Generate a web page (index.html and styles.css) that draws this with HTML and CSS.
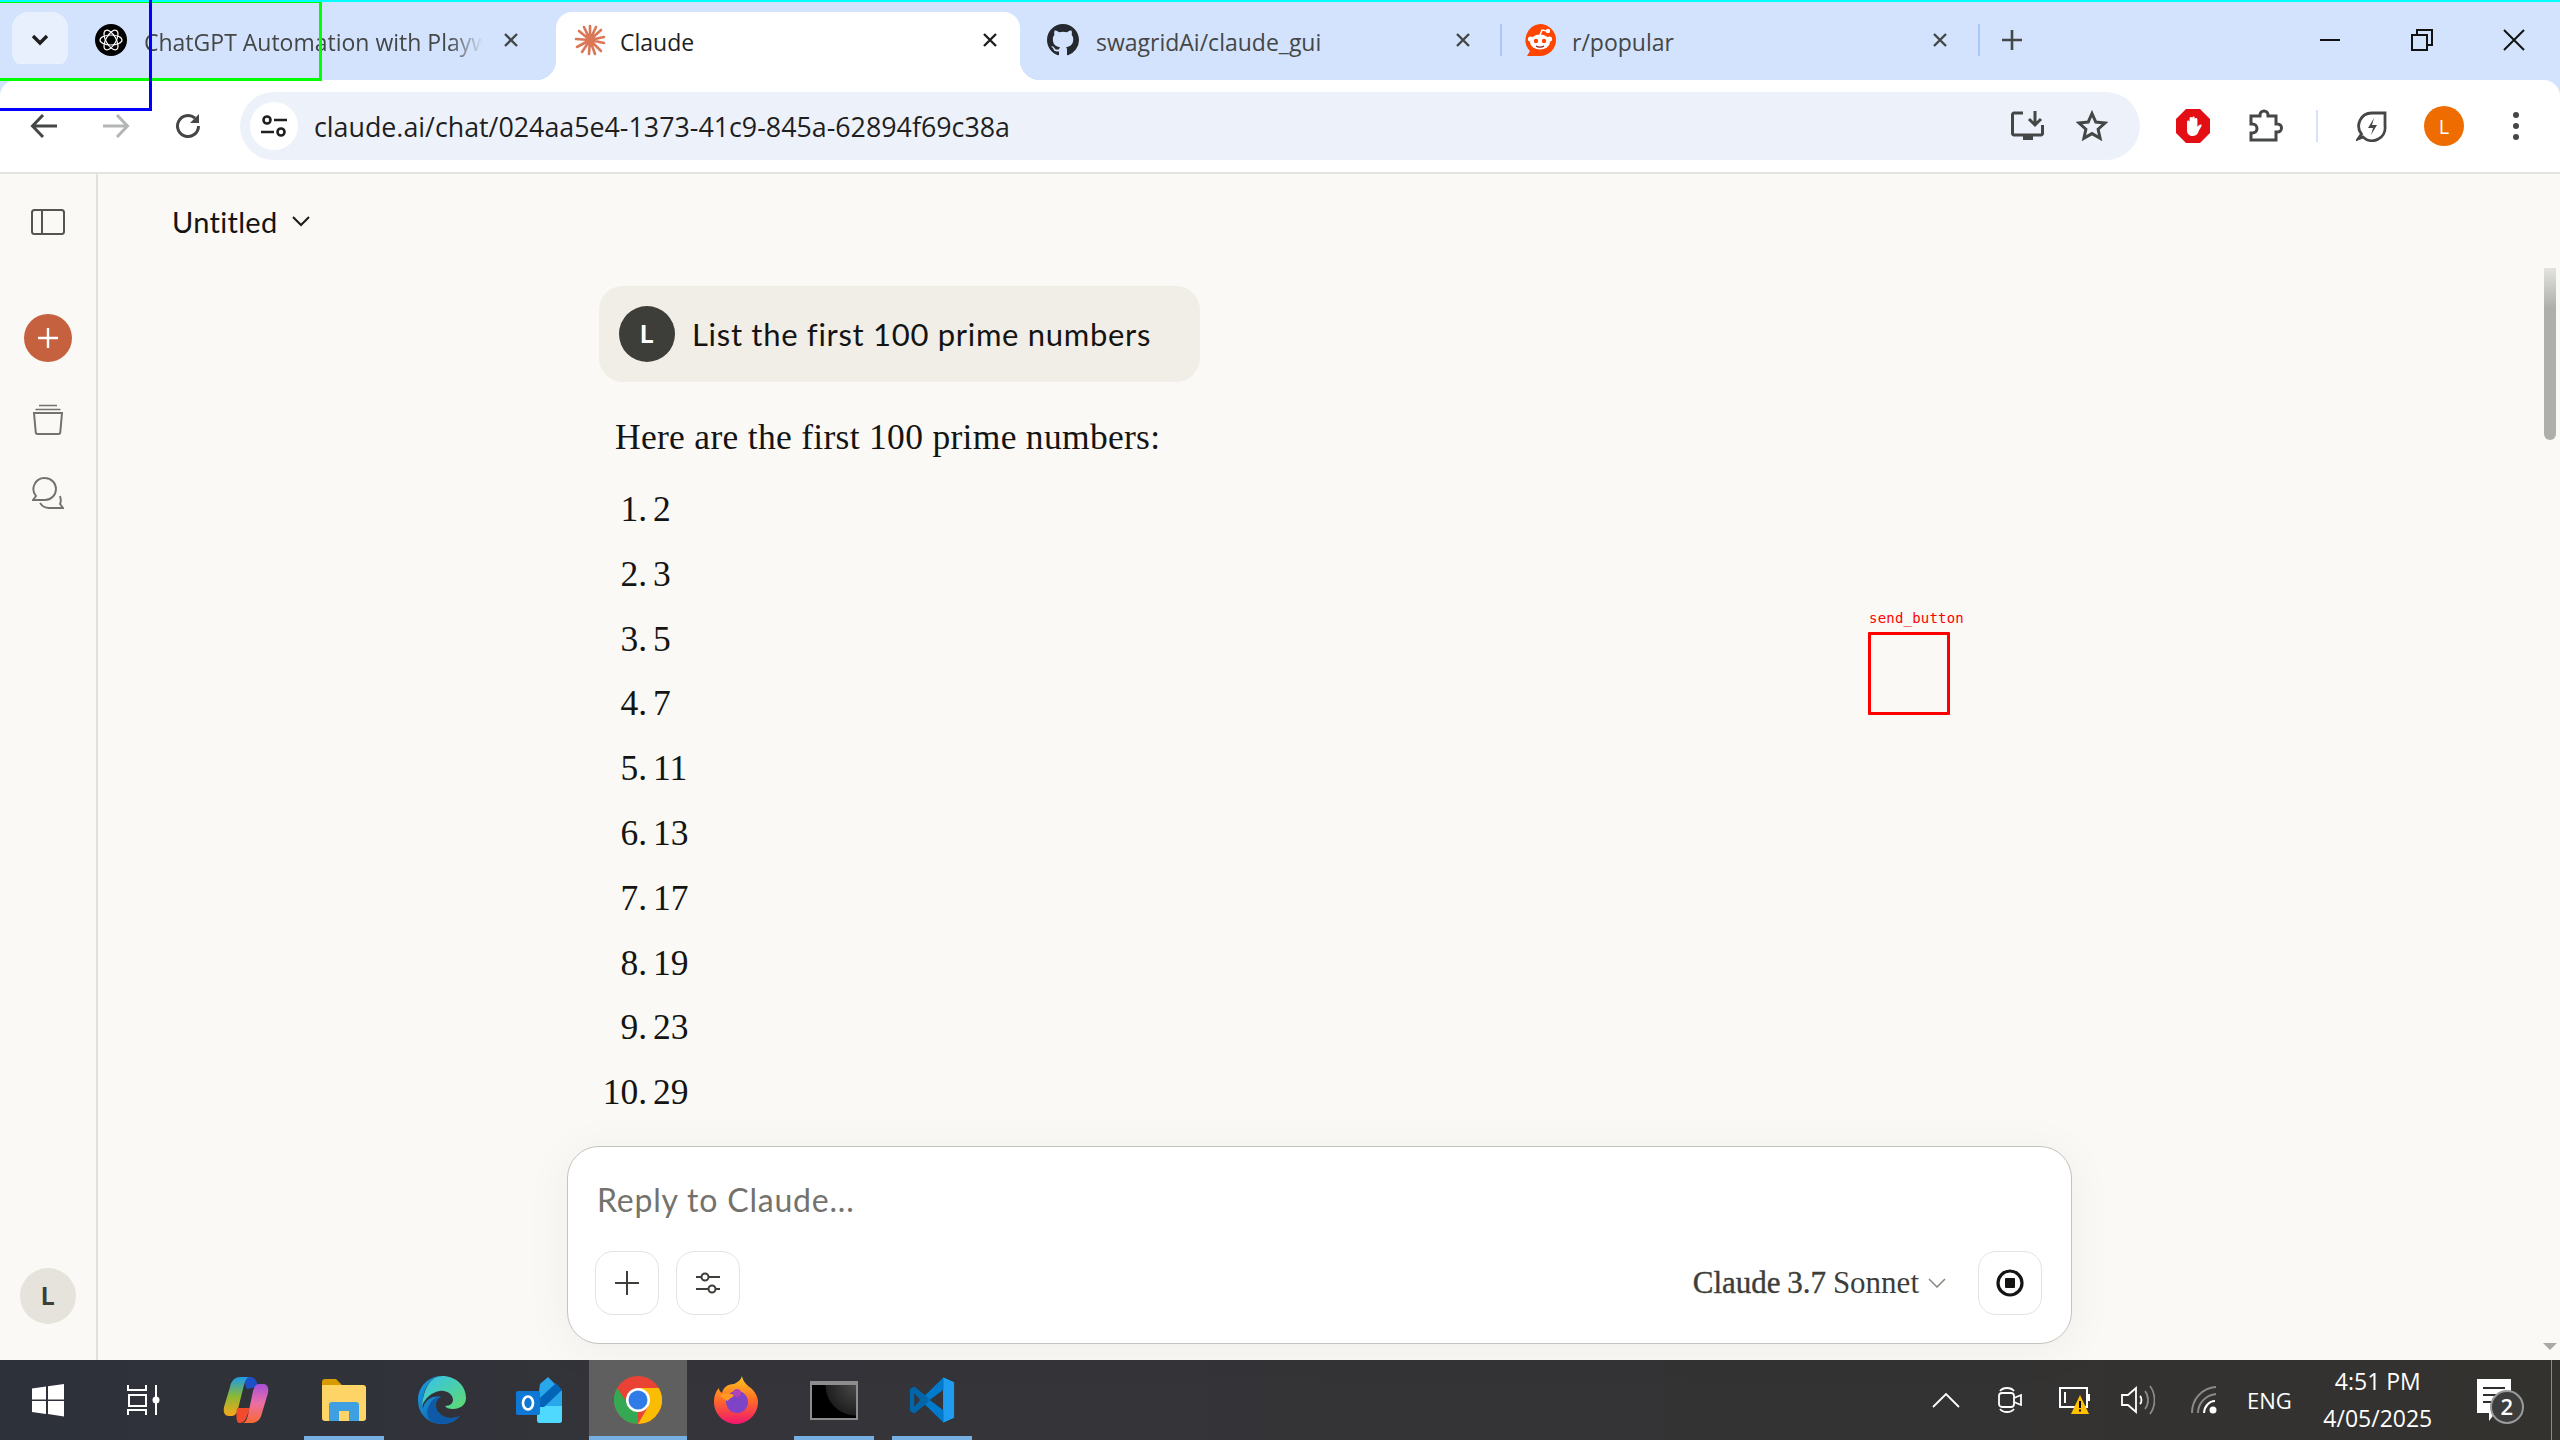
FILE: index.html
```html
<!DOCTYPE html>
<html lang="en">

<head>
	<meta charset="UTF-8">
	<title>Claude</title>
	<link rel="stylesheet" href="styles.css">
</head>

<body>
	<div class="tabstrip">
		<div class="tab-search">
			<svg width="20" height="14" viewBox="0 0 20 14"><path d="M3 3l7 7 7-7" fill="none" stroke="#1f1f1f" stroke-width="3.4"/></svg>
		</div>

		<div class="tab tab-first">
			<svg class="favicon" viewBox="0 0 32 32">
				<circle cx="16" cy="16" r="16" fill="#000"/>
				<g fill="none" stroke="#fff" stroke-width="1.2">
					<ellipse cx="16" cy="16" rx="11" ry="5"/>
					<ellipse cx="16" cy="16" rx="11" ry="5" transform="rotate(60 16 16)"/>
					<ellipse cx="16" cy="16" rx="11" ry="5" transform="rotate(120 16 16)"/>
				</g>
			</svg>
			<span class="tab-title tab-title-fade">ChatGPT Automation with Playw</span>
			<svg class="tab-close" viewBox="0 0 16 16"><path d="M2 2l12 12M14 2L2 14" stroke="#444746" stroke-width="2.4"/></svg>
		</div>

		<div class="tab tab-active">
			<svg class="favicon" viewBox="0 0 32 32">
				<g stroke="#d97757" stroke-width="2.6" stroke-linecap="round">
					<path d="M16 16L16 2M16 16L22 3M16 16L27 6M16 16L30 13M16 16L30 19M16 16L27 27M16 16L21 30M16 16L15 30M16 16L8 28M16 16L3 23M16 16L2 15M16 16L5 7M16 16L10 3"/>
				</g>
			</svg>
			<span class="tab-title tab-title-dark">Claude</span>
			<svg class="tab-close" viewBox="0 0 16 16"><path d="M2 2l12 12M14 2L2 14" stroke="#1f1f1f" stroke-width="2.4"/></svg>
		</div>

		<div class="tab tab-github">
			<svg class="favicon" viewBox="0 0 16 16"><path fill="#24292f" d="M8 0C3.58 0 0 3.58 0 8c0 3.54 2.29 6.53 5.47 7.59.4.07.55-.17.55-.38 0-.19-.01-.82-.01-1.49-2.01.37-2.53-.49-2.69-.94-.09-.23-.48-.94-.82-1.13-.28-.15-.68-.52-.01-.53.63-.01 1.08.58 1.23.82.72 1.21 1.87.87 2.33.66.07-.52.28-.87.51-1.07-1.78-.2-3.64-.89-3.64-3.95 0-.87.31-1.59.82-2.15-.08-.2-.36-1.02.08-2.12 0 0 .67-.21 2.2.82.64-.18 1.32-.27 2-.27.68 0 1.36.09 2 .27 1.53-1.04 2.2-.82 2.2-.82.44 1.1.16 1.92.08 2.12.51.56.82 1.27.82 2.15 0 3.07-1.87 3.75-3.65 3.95.29.25.54.73.54 1.48 0 1.07-.01 1.93-.01 2.2 0 .21.15.46.55.38A8.013 8.013 0 0016 8c0-4.42-3.58-8-8-8z"/></svg>
			<span class="tab-title">swagridAi/claude_gui</span>
			<svg class="tab-close" viewBox="0 0 16 16"><path d="M2 2l12 12M14 2L2 14" stroke="#444746" stroke-width="2.4"/></svg>
		</div>
		<div class="tab-sep tab-sep-first"></div>

		<div class="tab tab-reddit">
			<svg class="favicon" viewBox="0 0 32 32">
				<path fill="#ff4500" d="M16 0a16 16 0 0 1 0 32H3l3-5A16 16 0 0 1 16 0z"/>
				<ellipse cx="16" cy="18" rx="10" ry="7.5" fill="#fff"/>
				<circle cx="6.500" cy="15" r="2.600" fill="#fff"/>
				<circle cx="25.500" cy="15" r="2.600" fill="#fff"/>
				<path d="M16 11l2-5 5 1" fill="none" stroke="#fff" stroke-width="1.500"/>
				<circle cx="24" cy="7" r="2.200" fill="#fff"/>
				<circle cx="12" cy="17" r="2.200" fill="#ff4500"/>
				<circle cx="20" cy="17" r="2.200" fill="#ff4500"/>
				<path d="M12 22c2 1.500 6 1.500 8 0" fill="none" stroke="#842123" stroke-width="1.200"/>
			</svg>
			<span class="tab-title tab-title-reddit">r/popular</span>
			<svg class="tab-close" viewBox="0 0 16 16"><path d="M2 2l12 12M14 2L2 14" stroke="#444746" stroke-width="2.4"/></svg>
		</div>
		<div class="tab-sep tab-sep-last"></div>

		<svg class="new-tab" viewBox="0 0 24 24"><path d="M12 2v20M2 12h20" stroke="#444746" stroke-width="2.6"/></svg>

		<div class="window-controls">
			<div class="window-btn"><svg width="20" height="20" viewBox="0 0 20 20"><path d="M0 10h20" stroke="#111" stroke-width="2"/></svg></div>
			<div class="window-btn"><svg width="22" height="22" viewBox="0 0 22 22"><path d="M1 6h15v15H1zM6 6V1h15v15h-5" fill="none" stroke="#111" stroke-width="2"/></svg></div>
			<div class="window-btn"><svg width="22" height="22" viewBox="0 0 22 22"><path d="M1 1l20 20M21 1L1 21" stroke="#111" stroke-width="2"/></svg></div>
		</div>
	</div>

	<div class="toolbar">
		<div class="tool-btn"><svg width="28" height="26" viewBox="0 0 28 26"><path d="M27 13H3M13 2L2.500 13 13 24" fill="none" stroke="#444746" stroke-width="3"/></svg></div>
		<div class="tool-btn"><svg width="28" height="26" viewBox="0 0 28 26"><path d="M1 13h24M15 2l10.500 11L15 24" fill="none" stroke="#b4b5b5" stroke-width="3"/></svg></div>
		<div class="tool-btn"><svg width="28" height="28" viewBox="0 0 28 28"><path d="M24.500 14A10.500 10.500 0 1 1 21 6.200" fill="none" stroke="#444746" stroke-width="3"/><path d="M25 2v9h-9z" fill="#444746"/></svg></div>

		<div class="omnibox">
			<div class="site-info">
				<svg width="26" height="24" viewBox="0 0 26 24">
					<g fill="none" stroke="#1f1f1f" stroke-width="2.600">
						<circle cx="6" cy="6" r="3.500"/>
						<circle cx="20" cy="18" r="3.500"/>
						<path d="M13 6h13M0 18h13"/>
					</g>
				</svg>
			</div>
			<span class="url">claude.ai/chat/024aa5e4-1373-41c9-845a-62894f69c38a</span>
			<div class="omni-btn omni-btn-install"><svg width="34" height="32" viewBox="0 0 34 32"><path d="M12 3H3a1.500 1.500 0 0 0-1.500 1.500v19A1.500 1.500 0 0 0 3 25h27a1.500 1.500 0 0 0 1.500-1.500V15" fill="none" stroke="#444746" stroke-width="3"/><path d="M12 25h10v5H12z" fill="#444746"/><path d="M24 1v13M18 9l6 6 6-6" fill="none" stroke="#444746" stroke-width="3"/></svg></div>
			<div class="omni-btn"><svg width="32" height="32" viewBox="0 0 32 32"><path d="M16 3.500l3.800 8.500 9.200 1-6.900 6.200 2 9.100-8.100-4.700-8.100 4.700 2-9.100L3 13l9.200-1z" fill="none" stroke="#444746" stroke-width="3"/></svg></div>
		</div>

		<div class="tool-btn tool-btn-adblock">
			<svg width="36" height="36" viewBox="0 0 36 36">
				<path fill="#e40f14" d="M11 1h14l10 10v14L25 35H11L1 25V11z"/>
				<path fill="#fff" d="M12 14c0-2 2.600-2 2.600 0v-3.500c0-2 2.600-2 2.600 0V10c0-2 2.600-2 2.600 0v1.500c0-2 2.600-2 2.600 0V19c1-2 3.500-3 4.200-2 .5.700-2 4-3.200 7-1 2.500-3 4-6 4-3.500 0-5.400-2.500-5.400-6z"/>
			</svg>
		</div>
		<div class="tool-btn">
			<svg width="36" height="34" viewBox="0 0 36 34"><path d="M13 6a4 4 0 0 1 8 0v1h8v8h1.500a4 4 0 0 1 0 8H29v8H4v-7h1.500a4.500 4.500 0 0 0 0-9H4V7h9z" fill="none" stroke="#444746" stroke-width="3"/></svg>
		</div>
		<div class="tool-sep"></div>
		<div class="tool-btn">
			<svg width="32" height="32" viewBox="0 0 32 32"><path d="M29 3H16A13 13 0 0 0 5.500 24L2 29l5-2A13 13 0 0 0 29 16z" fill="none" stroke="#444746" stroke-width="2.800"/><path d="M18 8l-6 10h5l-2 7 6-10h-5z" fill="#444746"/></svg>
		</div>
		<div class="tool-btn"><div class="profile">L</div></div>
		<div class="tool-btn">
			<svg width="6" height="28" viewBox="0 0 6 28"><circle cx="3" cy="3" r="3" fill="#444746"/><circle cx="3" cy="14" r="3" fill="#444746"/><circle cx="3" cy="25" r="3" fill="#444746"/></svg>
		</div>
	</div>

	<div class="main">
		<div class="sidebar">
			<svg class="side-panel" width="34" height="26" viewBox="0 0 34 26"><rect x="1" y="1" width="32" height="24" rx="2.500" fill="none" stroke="#55544f" stroke-width="2"/><path d="M11 1v24" stroke="#55544f" stroke-width="2"/></svg>
			<div class="new-chat">
				<svg width="22" height="22" viewBox="0 0 22 22"><path d="M11 1v20M1 11h20" stroke="#fff" stroke-width="2.400"/></svg>
			</div>
			<svg class="side-stack" width="32" height="32" viewBox="0 0 32 32"><path d="M7 1.500h18M3.500 5.500h25" stroke="#73726c" stroke-width="1.500"/><path d="M2 9h28l-1.700 19a2 2 0 0 1-2 2H5.700a2 2 0 0 1-2-2z" fill="none" stroke="#73726c" stroke-width="2"/></svg>
			<svg class="side-chats" width="32" height="34" viewBox="0 0 32 34"><path d="M13 1a11 11 0 0 1 0 22H1l3-4A11 11 0 0 1 13 1z" fill="none" stroke="#73726c" stroke-width="1.900"/><path d="M8 26c2 3 5 5 9 5h14l-3-4c1-2 1-5 0-8" fill="none" stroke="#73726c" stroke-width="1.900"/></svg>
			<div class="user-badge">L</div>
		</div>

		<div class="chat">
			<div class="chat-head">
				<span class="chat-title">Untitled</span>
				<svg width="18" height="11" viewBox="0 0 18 11"><path d="M1 1l8 8 8-8" fill="none" stroke="#1a1a18" stroke-width="2"/></svg>
			</div>

			<div class="thread">
				<div class="user-msg">
					<div class="user-avatar">L</div>
					<span class="user-text">List the first 100 prime numbers</span>
				</div>
				<p class="answer-intro">Here are the first 100 prime numbers:</p>
				<ol class="answer-list">
					<li>2</li>
					<li>3</li>
					<li>5</li>
					<li>7</li>
					<li>11</li>
					<li>13</li>
					<li>17</li>
					<li>19</li>
					<li>23</li>
					<li>29</li>
				</ol>
			</div>

			<div class="composer">
				<div class="composer-input">Reply to Claude...</div>
				<div class="composer-row">
					<div class="composer-btn">
						<svg width="24" height="24" viewBox="0 0 24 24"><path d="M12 0v24M0 12h24" stroke="#3d3d3a" stroke-width="2"/></svg>
					</div>
					<div class="composer-btn composer-btn-second">
						<svg width="26" height="24" viewBox="0 0 26 24"><g fill="none" stroke="#3d3d3a" stroke-width="2"><path d="M1 6h5M14 6h11M1 18h12M21 18h4"/><circle cx="10" cy="6" r="3.500"/><circle cx="17" cy="18" r="3.500"/></g></svg>
					</div>
					<div class="model-pick">
						<span class="model-name"><b>Claude 3.7</b> Sonnet</span>
						<svg width="18" height="10" viewBox="0 0 18 10"><path d="M1 1l8 8 8-8" fill="none" stroke="#87867f" stroke-width="1.500"/></svg>
					</div>
					<div class="composer-btn">
						<svg width="28" height="28" viewBox="0 0 28 28"><circle cx="14" cy="14" r="12" fill="none" stroke="#141413" stroke-width="3.200"/><rect x="9" y="9" width="10" height="10" rx="1" fill="#141413"/></svg>
					</div>
				</div>
			</div>
		</div>

		<div class="scroll-thumb"></div>
		<div class="scroll-arrow"></div>
	</div>

	<div class="taskbar">
		<div class="task-slot task-start">
			<svg width="34" height="34" viewBox="0 0 34 34"><path fill="#fff" d="M1 5.500l14-2v13H1zM17 3.200L33 1v15.500H17zM1 18h14v13l-14-2zM17 18h16v15.500L17 31z"/></svg>
		</div>
		<div class="task-slot task-view">
			<svg width="34" height="32" viewBox="0 0 34 32">
				<g fill="none" stroke="#fff" stroke-width="2">
					<path d="M2 1v5h18V1M2 31v-5h18v5M3 11h17v11H3zM30 1v30"/>
				</g>
				<circle cx="30" cy="16" r="3.500" fill="#fff"/>
			</svg>
		</div>
		<div class="task-slot task-copilot">
			<svg width="48" height="48" viewBox="0 0 48 48">
				<defs>
					<linearGradient id="cpA" x1="0" y1="0" x2="0" y2="1"><stop offset="0" stop-color="#1c9be8"/><stop offset=".5" stop-color="#8db832"/><stop offset="1" stop-color="#f7a71c"/></linearGradient>
					<linearGradient id="cpB" x1="0" y1="0" x2="0" y2="1"><stop offset="0" stop-color="#a84fd8"/><stop offset=".5" stop-color="#ec6fa4"/><stop offset="1" stop-color="#f96a31"/></linearGradient>
				</defs>
				<path fill="#1c50c8" d="M20 1h8c5 0 7 4 8 10l-11 2z"/>
				<path fill="url(#cpA)" d="M18 1h10c-3 0-5 3-6 8l-6 24c-1 4-3 7-6 7H7c-4 0-6-3-5-9L8 11c1-6 5-10 10-10z"/>
				<path fill="#f04b2d" d="M15 32h13l-3 8c-1 4-4 7-7 7h-1c-3 0-3-9-2-15z"/>
				<path fill="url(#cpB)" d="M30 47H20c3 0 5-3 6-8l5-24c1-4 3-7 6-7h4c4 0 6 3 5 9l-6 20c-1 6-5 10-10 10z"/>
			</svg>
		</div>
		<div class="task-slot task-open">
			<svg width="44" height="42" viewBox="0 0 44 42">
				<path fill="#d79b00" d="M0 3a3 3 0 0 1 3-3h11l6 6h-20z"/>
				<path fill="#ffd466" d="M0 6h41a3 3 0 0 1 3 3v30a3 3 0 0 1-3 3H3a3 3 0 0 1-3-3z"/>
				<path fill="#3f9fe3" d="M7 42V26a3 3 0 0 1 3-3h24a3 3 0 0 1 3 3v16z"/>
				<path fill="#ffd466" d="M17 42V32h10v10z"/>
			</svg>
		</div>
		<div class="task-slot">
			<svg width="48" height="48" viewBox="0 0 48 48">
				<defs>
					<linearGradient id="edA" x1="0" y1="0" x2="1" y2="1"><stop offset="0" stop-color="#35c1f1"/><stop offset="1" stop-color="#5fdb6e"/></linearGradient>
					<linearGradient id="edB" x1="0" y1="0" x2="1" y2="1"><stop offset="0" stop-color="#1b9de2"/><stop offset="1" stop-color="#0c59a4"/></linearGradient>
				</defs>
				<path fill="url(#edB)" d="M24 0C10 0 0 11 0 24c0 14 10 24 24 24 8 0 14-3 18-8-6 3-16 3-21-3-5-5-4-14 2-16-8-2-17 3-18 12C3 14 12 0 24 0z"/>
				<path fill="#0f5aa8" d="M23 21c-6 2-7 11-2 16 5 6 15 6 21 3-5 5-11 8-18 8-6 0-12-2-14-7-3-8 4-21 13-20z"/>
				<path fill="url(#edA)" d="M24 0c14 0 24 10 24 22 0 7-6 11-13 11-4 0-7-1-8-3 5 0 8-3 8-6 0-6-7-10-13-9-8 1-15 7-18 15C6 11 13 0 24 0z"/>
			</svg>
		</div>
		<div class="task-slot">
			<svg width="48" height="48" viewBox="0 0 48 48">
				<path fill="#28a8ea" d="M24 8l8-7 14 14v29a3 3 0 0 1-3 3H24a3 3 0 0 1-3-3V30z"/>
				<path fill="#50d9ff" d="M21 30h25v14a3 3 0 0 1-3 3H24a3 3 0 0 1-3-3z"/>
				<path fill="#0364b8" d="M24 22L40 7l6 7-18 17h-4z"/>
				<rect x="0" y="15" width="24" height="24" rx="2" fill="#0f78d4"/>
				<ellipse cx="12" cy="27" rx="5" ry="6.500" fill="none" stroke="#fff" stroke-width="2.600"/>
			</svg>
		</div>
		<div class="task-slot task-open task-active">
			<svg width="48" height="48" viewBox="0 0 48 48">
				<circle cx="24" cy="24" r="24" fill="#ea4335"/>
				<path fill="#34a853" d="M3.200 12l12 18h8.800L24 48A24 24 0 0 1 3.200 12z"/>
				<path fill="#fbbc04" d="M24 12h20.800A24 24 0 0 1 24 48l10.400-18z"/>
				<circle cx="24" cy="24" r="12" fill="#fff"/>
				<circle cx="24" cy="24" r="9.500" fill="#2f7ce8"/>
			</svg>
		</div>
		<div class="task-slot">
			<svg width="44" height="48" viewBox="0 0 44 48">
				<defs>
					<linearGradient id="ffA" x1="0" y1="0" x2="0" y2="1"><stop offset="0" stop-color="#ffc91f"/><stop offset=".5" stop-color="#ff6b26"/><stop offset="1" stop-color="#f0166f"/></linearGradient>
				</defs>
				<path fill="url(#ffA)" d="M28 0c1 6 5 9 10 13 4 4 6 9 6 13 0 12-10 22-22 22S0 38 0 26c0-6 2-11 5-14 0 2 1 4 3 5 1-5 5-9 12-9 4-2 7-4 8-8z"/>
				<circle cx="23" cy="26" r="11" fill="#7e44c8"/>
				<path fill="#ff9a24" d="M6 19c4-1 10-2 14 0-1 3-5 3-6 6-3-1-6-3-8-6z"/>
				<circle cx="23" cy="17" r="4" fill="#b043b8"/>
			</svg>
		</div>
		<div class="task-slot task-open">
			<div class="term-icon"></div>
		</div>
		<div class="task-slot task-open">
			<svg width="48" height="48" viewBox="0 0 100 100">
				<path fill="#0065a9" d="M74 3L36 40 13 22 4 27v46l9 5 23-18 38 37 22-10V13zM74 28v44L45 50zM13 36l12 14-12 14z"/>
				<path fill="#1f9cf0" d="M74 3l22 10v74l-22 10-1-1V4z"/>
				<path fill="#007acc" d="M74 3L36 40l9 10 29-22zM36 60l38 37V72L45 50z"/>
			</svg>
		</div>

		<div class="tray">
			<svg class="tray-caret" width="28" height="16" viewBox="0 0 28 16"><path d="M1 15L14 2l13 13" fill="none" stroke="#fff" stroke-width="1.800"/></svg>
			<svg class="tray-meet" width="24" height="32" viewBox="0 0 24 32"><path d="M2 7c3-4 11-4 14 0M2 25c3 4 11 4 14 0" fill="none" stroke="#fff" stroke-width="1.800"/><rect x="1" y="9" width="15" height="14" rx="3" fill="none" stroke="#fff" stroke-width="1.800"/><path d="M16 14l7-3v10l-7-3" fill="none" stroke="#fff" stroke-width="1.800"/></svg>
			<svg class="tray-battery" width="32" height="32" viewBox="0 0 32 32"><path d="M1 4h27v19H1z" fill="none" stroke="#fff" stroke-width="2"/><path d="M5 8h2v11H5z" fill="#fff"/><path d="M29 10h2v7h-2z" fill="#fff"/><path d="M21 11l9 19H12z" fill="#ffc000"/><path d="M20 17h2v7h-2zM20 25.500h2v2h-2z" fill="#000"/></svg>
			<svg class="tray-volume" width="34" height="32" viewBox="0 0 34 32"><path d="M1 11h6l8-7v24l-8-7H1z" fill="none" stroke="#fff" stroke-width="1.800"/><path d="M19 12c2 2 2 6 0 8" fill="none" stroke="#fff" stroke-width="1.800"/><path d="M24 7c4 5 4 13 0 18M29 2c6 8 6 20 0 28" fill="none" stroke="#8a8a8a" stroke-width="1.800"/></svg>
			<svg class="tray-wifi" width="26" height="28" viewBox="0 0 26 28"><path d="M1 27C1 13 11 2 25 1M7 27c0-10 8-18 18-19" fill="none" stroke="#8a8a8a" stroke-width="2"/><path d="M13 27c0-6 5-12 11-12" fill="none" stroke="#fff" stroke-width="2"/><circle cx="22" cy="24" r="3.500" fill="#fff"/></svg>
			<span class="tray-lang">ENG</span>
			<div class="clock">
				<span>4:51 PM</span>
				<span>4/05/2025</span>
			</div>
			<div class="notify">
				<svg width="34" height="42" viewBox="0 0 34 42"><path fill="#fff" d="M0 0h34v34h-16l-6 8v-8H0z"/><path d="M6 9h22M6 16h22M6 23h14" stroke="#2e2e2e" stroke-width="2"/></svg>
				<span class="notify-count">2</span>
			</div>
			<div class="show-desktop"></div>
		</div>
	</div>

	<!-- detection boxes drawn over the screenshot -->
	<div class="mark mark-green"></div>
	<div class="mark mark-cyan"></div>
	<div class="mark mark-blue"></div>
	<div class="mark mark-send"><span class="mark-label">send_button</span></div>
</body>

</html>
```

FILE: styles.css
```css
* {
	box-sizing: border-box;
}

html,
body {
	margin: 0;
	height: 1440px;
	overflow: hidden;
}

body {
	position: relative;
	display: flex;
	flex-direction: column;
	background-color: #faf9f5;
	font-family: "Open Sans", sans-serif;
}

svg {
	display: block;
	flex: none;
}

/* tab strip */

.tabstrip {
	display: flex;
	align-items: center;
	height: 80px;
	flex: none;
	background-color: #d3e3fd;
}

.tab-search {
	display: flex;
	align-items: center;
	justify-content: center;
	width: 56px;
	height: 56px;
	margin: 0 0 0 12px;
	border-radius: 16px;
	background-color: #e9f0fd;
}

.tab {
	position: relative;
	display: flex;
	align-items: center;
	width: 464px;
	height: 68px;
	margin-top: 12px;
	padding: 0 22px 12px 18px;
	flex: none;
	border-radius: 16px 16px 0 0;
}

.tab-first {
	margin-left: 9px;
}

.tab-active {
	margin-left: 15px;
	background-color: #fff;
}

.tab-active::before,
.tab-active::after {
	content: "";
	position: absolute;
	bottom: 0;
	width: 20px;
	height: 20px;
}

.tab-active::before {
	left: -20px;
	background: radial-gradient(circle at 0 0, transparent 20px, #fff 20.5px);
}

.tab-active::after {
	right: -20px;
	background: radial-gradient(circle at 100% 0, transparent 20px, #fff 20.5px);
}

.tab-github {
	margin-left: 9px;
}

.favicon {
	width: 32px;
	height: 32px;
}

.tab-title {
	flex: 1;
	min-width: 0;
	margin-left: 17px;
	padding-top: 3px;
	white-space: nowrap;
	font-size: 23px;
	line-height: 32px;
	color: #444746;
}

.tab-title-dark {
	color: #1f1f1f;
	margin-left: 14px;
}

.tab-title-reddit {
	margin-left: 16px;
}

.tab-title-fade {
	-webkit-mask-image: linear-gradient(to right, #000 90%, transparent 100%);
	mask-image: linear-gradient(to right, #000 90%, transparent 100%);
}

.tab-close {
	width: 16px;
	height: 16px;
	margin-left: 20px;
}

.tab-sep {
	width: 2px;
	height: 32px;
	background-color: #a8c7fa;
	flex: none;
}

.tab-sep-first {
	margin: 0 4px 0 7px;
}

.tab-sep-last {
	margin-left: 8px;
}

.new-tab {
	width: 24px;
	height: 24px;
	margin-left: 20px;
}

.window-controls {
	display: flex;
	margin-left: auto;
	height: 80px;
}

.window-btn {
	display: flex;
	align-items: center;
	justify-content: center;
	width: 92px;
	height: 80px;
}

/* toolbar */

.toolbar {
	display: flex;
	align-items: center;
	height: 92px;
	flex: none;
	padding-left: 8px;
	background-color: #fff;
	border-radius: 16px 16px 0 0;
	box-shadow: 0 -16px 0 0 #d3e3fd;
}

.tool-btn {
	display: flex;
	align-items: center;
	justify-content: center;
	width: 72px;
	height: 68px;
	flex: none;
}

.tool-btn-adblock {
	margin-left: 17px;
}

.tool-sep {
	width: 2px;
	height: 32px;
	margin: 0 18px 0 15px;
	background-color: #d3e3fd;
	flex: none;
}

.omnibox {
	display: flex;
	align-items: center;
	width: 1900px;
	height: 68px;
	margin-left: 16px;
	padding: 0 16px 0 10px;
	border-radius: 34px;
	background-color: #edf2fa;
	flex: none;
}

.site-info {
	display: flex;
	align-items: center;
	justify-content: center;
	width: 48px;
	height: 48px;
	border-radius: 50%;
	background-color: #fff;
}

.url {
	margin-left: 16px;
	font-size: 26.8px;
	color: #1f1f1f;
	white-space: nowrap;
}

.omni-btn {
	display: flex;
	align-items: center;
	justify-content: center;
	width: 64px;
	height: 48px;
}

.omni-btn-install {
	margin-left: auto;
}

.profile {
	display: flex;
	align-items: center;
	justify-content: center;
	width: 40px;
	height: 40px;
	border-radius: 50%;
	background-color: #ef6c00;
	color: #fff;
	font-size: 20px;
}

/* main area */

.main {
	position: relative;
	display: flex;
	height: 1188px;
	flex: none;
	border-top: 2px solid #e3e3df;
	background-color: #faf9f5;
}

.sidebar {
	display: flex;
	flex-direction: column;
	align-items: center;
	width: 98px;
	flex: none;
	border-right: 2px solid #e2e0d9;
	padding-top: 35px;
	padding-bottom: 36px;
}

.new-chat {
	display: flex;
	align-items: center;
	justify-content: center;
	width: 48px;
	height: 48px;
	margin-top: 79px;
	border-radius: 50%;
	background-color: #c6613f;
	flex: none;
}

.side-stack {
	margin-top: 42px;
}

.side-chats {
	margin-top: 41px;
}

.user-badge {
	display: flex;
	align-items: center;
	justify-content: center;
	width: 56px;
	height: 56px;
	margin-top: auto;
	border-radius: 50%;
	background-color: #e5e3db;
	color: #3d3d3a;
	font-family: Inter, sans-serif;
	font-size: 24px;
	font-weight: 700;
}

.chat {
	display: flex;
	flex-direction: column;
	flex: 1;
	min-width: 0;
}

.chat-head {
	display: flex;
	align-items: center;
	gap: 15px;
	height: 98px;
	flex: none;
	padding: 0 0 3px 74px;
}

.chat-title {
	font-family: Lato, sans-serif;
	font-size: 29px;
	letter-spacing: 0.3px;
	color: #141413;
}

.thread {
	flex: 1;
	min-height: 0;
	padding: 14px 0 0 469px;
	overflow: hidden;
}

.user-msg {
	display: flex;
	align-items: center;
	width: 601px;
	height: 96px;
	margin-left: 32px;
	padding-left: 20px;
	border-radius: 24px;
	background-color: #f0eee6;
}

.user-avatar {
	display: flex;
	align-items: center;
	justify-content: center;
	width: 56px;
	height: 56px;
	border-radius: 50%;
	background-color: #3d3d3a;
	color: #fff;
	font-family: Inter, sans-serif;
	font-size: 24px;
	font-weight: 700;
	flex: none;
}

.user-text {
	margin-left: 17px;
	font-family: Lato, sans-serif;
	font-size: 31px;
	letter-spacing: 0.7px;
	color: #141413;
	white-space: nowrap;
}

.answer-intro {
	margin: 32px 0 0 48px;
	font-family: "Liberation Serif", serif;
	font-size: 35.5px;
	letter-spacing: 0.3px;
	line-height: 46px;
	color: #141413;
}

.answer-list {
	margin: 20px 0 0 0;
	padding: 0 0 0 86px;
	font-family: "Liberation Serif", serif;
	font-size: 35.5px;
	color: #141413;
}

.answer-list li {
	height: 64.8px;
	line-height: 58px;
}

.answer-list li::marker {
	content: counter(list-item) ".\200A\200A";
}

/* reply box */

.composer {
	display: flex;
	flex-direction: column;
	width: 1505px;
	height: 198px;
	flex: none;
	margin: 0 0 16px 469px;
	padding: 0 29px 27px 27px;
	border: 1px solid #c4c3bd;
	border-radius: 32px;
	background-color: #fff;
	box-shadow: 0 6px 48px rgba(0, 0, 0, 0.05);
}

.composer-input {
	height: 104px;
	padding-left: 2px;
	font-family: Lato, sans-serif;
	font-size: 32px;
	letter-spacing: 0.8px;
	line-height: 106px;
	color: #73726c;
}

.composer-row {
	display: flex;
	align-items: center;
}

.composer-btn {
	display: flex;
	align-items: center;
	justify-content: center;
	width: 64px;
	height: 64px;
	border: 1px solid #e4e3dd;
	border-radius: 18px;
	flex: none;
}

.composer-btn-second {
	margin-left: 17px;
}

.model-pick {
	display: flex;
	align-items: center;
	margin-left: auto;
	margin-right: 32px;
	gap: 9px;
}

.model-name {
	font-family: "Liberation Serif", serif;
	font-size: 31px;
	color: #3d3d3a;
	word-spacing: -1px;
}

.model-name b {
	font-weight: 400;
	-webkit-text-stroke: 0.4px #3d3d3a;
}

.scroll-thumb {
	position: absolute;
	left: 2544px;
	top: 94px;
	width: 12px;
	height: 172px;
	border-radius: 0 0 6px 6px;
	background: linear-gradient(to bottom, #e3e3df, #aeaeaa 40px);
}

.scroll-arrow {
	position: absolute;
	left: 2543px;
	top: 1169px;
	border-left: 7px solid transparent;
	border-right: 7px solid transparent;
	border-top: 7px solid #a9a9a5;
}

/* windows taskbar */

.taskbar {
	display: flex;
	height: 80px;
	flex: none;
	background: linear-gradient(to right, #2d3139, #35343a 30%, #33322f);
	color: #fff;
}

.task-slot {
	position: relative;
	display: flex;
	align-items: center;
	justify-content: center;
	width: 98px;
	height: 80px;
	flex: none;
}

.task-start {
	width: 96px;
}

.task-view {
	width: 94px;
}

.task-copilot {
	margin-left: 7px;
}

.task-active {
	background-color: #5f5f5f;
}

.task-open::after {
	content: "";
	position: absolute;
	left: 9px;
	right: 9px;
	bottom: 0;
	height: 4px;
	background-color: #76b0e3;
}

.task-active::after {
	left: 0;
	right: 0;
}

.term-icon {
	width: 48px;
	height: 39px;
	border: 2px solid #8d8d8d;
	border-top-width: 4px;
	background: radial-gradient(circle at 100% 0, #4a4a4a, #1e1e1e 55%, #000 56%);
}

.tray {
	display: flex;
	align-items: center;
	height: 80px;
	margin-left: auto;
	position: relative;
	width: 640px;
}

.tray-caret {
	margin-left: 12px;
}

.tray-meet {
	margin-left: 38px;
}

.tray-battery {
	margin-left: 37px;
}

.tray-volume {
	margin-left: 30px;
}

.tray-wifi {
	margin-left: 36px;
}

.tray-lang {
	margin-left: 30px;
	font-size: 22px;
	color: #fff;
}

.clock {
	display: flex;
	flex-direction: column;
	align-items: center;
	width: 140px;
	margin-left: 16px;
	font-size: 23px;
	line-height: 37px;
}

.notify {
	position: relative;
	margin-left: 29px;
	height: 42px;
}

.notify-count {
	position: absolute;
	left: 13px;
	top: 11px;
	width: 34px;
	height: 34px;
	border: 2px solid #9b9b9b;
	border-radius: 50%;
	background-color: #3d3d3d;
	text-align: center;
	font-size: 22px;
	font-weight: 600;
	line-height: 29px;
}

.show-desktop {
	position: absolute;
	right: 8px;
	top: 0;
	width: 1px;
	height: 80px;
	background-color: #8a8a8a;
}

/* detection boxes */

.mark {
	position: absolute;
	pointer-events: none;
}

.mark-green {
	left: -3px;
	top: 0;
	width: 325px;
	height: 81px;
	border: 3px solid #0f0;
}

.mark-cyan {
	left: 0;
	top: 0;
	width: 2560px;
	height: 2px;
	background-color: #0ff;
}

.mark-blue {
	left: -3px;
	top: -3px;
	width: 155px;
	height: 114px;
	border: 3px solid #00f;
}

.mark-send {
	left: 1868px;
	top: 632px;
	width: 82px;
	height: 83px;
	border: 3px solid #f00;
	border-radius: 1px;
}

.mark-label {
	position: absolute;
	left: -2px;
	top: -25px;
	font-family: "DejaVu Sans Mono", monospace;
	font-size: 14px;
	letter-spacing: 0.2px;
	line-height: 16px;
	color: #f00;
	white-space: nowrap;
}
```
